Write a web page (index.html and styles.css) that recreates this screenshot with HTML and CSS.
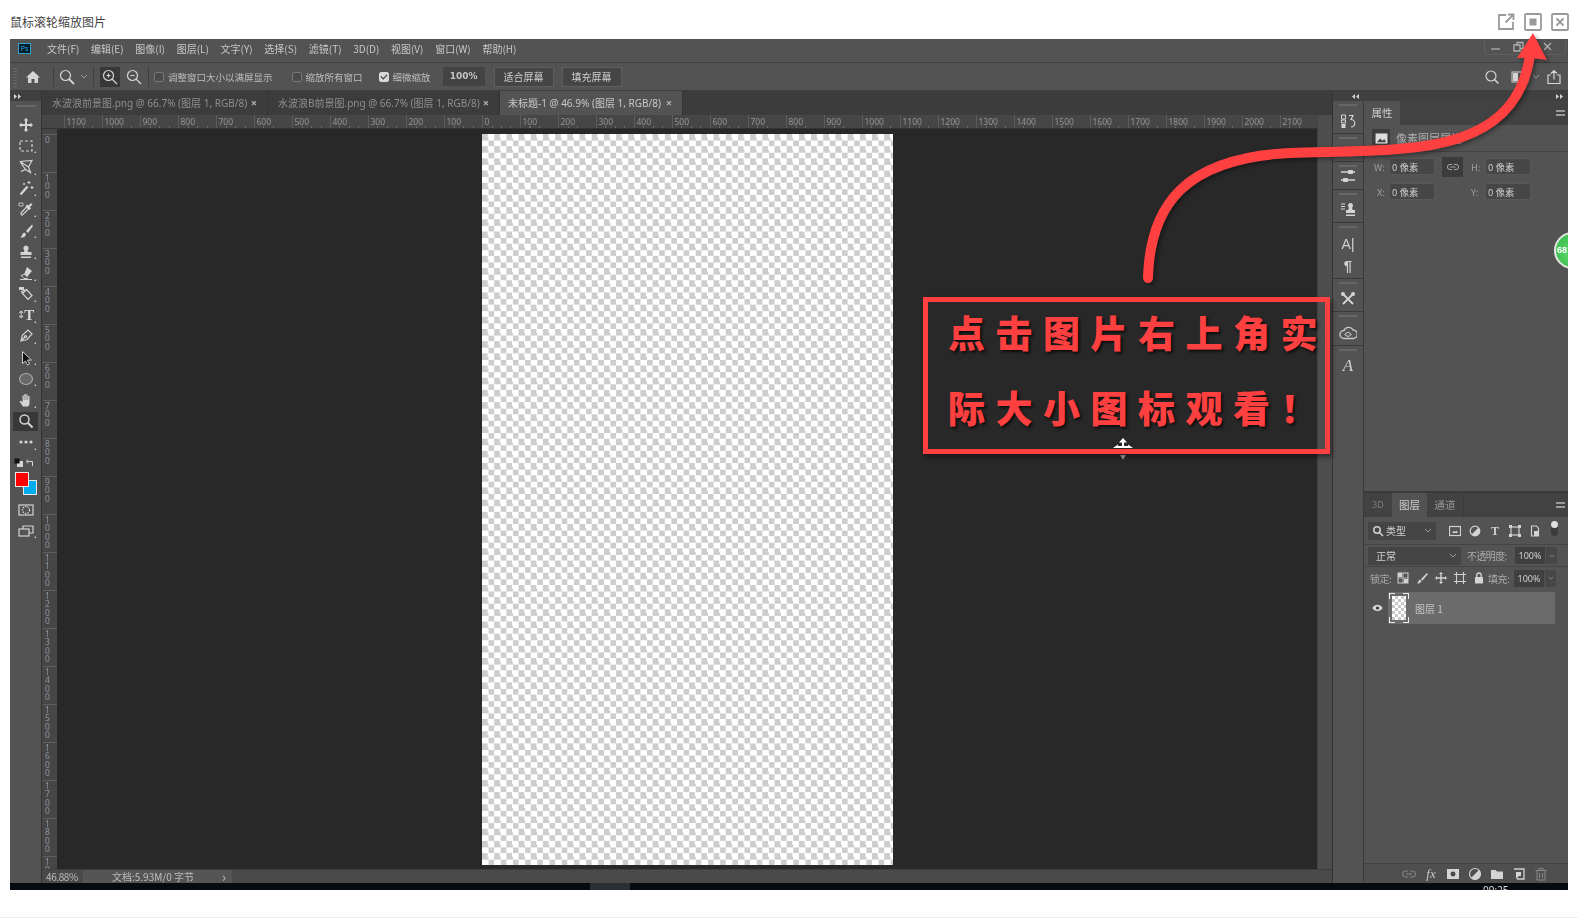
FILE: index.html
```html
<!DOCTYPE html>
<html lang="zh-CN">
<head>
<meta charset="utf-8">
<title>鼠标滚轮缩放图片</title>
<link rel="stylesheet" href="styles.css">
</head>
<body>
<header class="viewer-head">
  <div class="viewer-title">鼠标滚轮缩放图片</div>
  <div class="viewer-actions">
    <svg class="va" viewBox="0 0 18 18"><path d="M9 2H2v14h14V9M11 1.500h5.500V7M16 2L8.500 9.500"/></svg>
    <svg class="va" viewBox="0 0 18 18"><rect x="1" y="1" width="16" height="16" rx="1"/><rect class="va-fill" x="5.500" y="5.500" width="7" height="7"/></svg>
    <svg class="va" viewBox="0 0 18 18"><rect x="1" y="1" width="16" height="16" rx="1"/><path d="M5.500 5.500l7 7M12.500 5.500l-7 7"/></svg>
  </div>
</header>

<main class="ps">
  <div class="menubar">
    <span class="ps-logo">Ps</span>
    <nav class="menu">
      <span>文件(F)</span><span>编辑(E)</span><span>图像(I)</span><span>图层(L)</span><span>文字(Y)</span><span>选择(S)</span><span>滤镜(T)</span><span>3D(D)</span><span>视图(V)</span><span>窗口(W)</span><span>帮助(H)</span>
    </nav>
    <div class="winctl">
      <svg class="wc" viewBox="0 0 16 12"><path d="M3 8h9"/></svg>
      <svg class="wc" viewBox="0 0 16 12"><path d="M4 4h6v6H4zM7 4V1.500h6v6h-3"/></svg>
      <svg class="wc" viewBox="0 0 16 12"><path d="M4 2l7 7M11 2l-7 7"/></svg>
    </div>
  </div>

  <div class="optbar">
    <span class="grip"></span>
    <svg class="ic home" viewBox="0 0 16 16"><path class="f" d="M8 2L1 8.500h2V14h3.500v-4h3v4H13V8.500h2z"/></svg>
    <span class="osep s1"></span>
    <svg class="ic m1" viewBox="0 0 16 16"><circle cx="6.500" cy="6.500" r="5"/><path d="M10 10l5 5" stroke-width="1.800"/></svg>
    <svg class="chev m2" viewBox="0 0 8 5"><path d="M1 1l3 3 3-3"/></svg>
    <span class="osep s2"></span>
    <span class="obtn"><svg class="ic" viewBox="0 0 16 16"><circle cx="6.500" cy="6.500" r="5"/><path d="M10 10l5 5M4.500 6.500h4M6.500 4.500v4"/></svg></span>
    <svg class="ic m3" viewBox="0 0 16 16"><circle cx="6.500" cy="6.500" r="5"/><path d="M10 10l5 5M4.500 6.500h4"/></svg>
    <span class="osep s3"></span>
    <span class="cb c1"></span><span class="olabel">调整窗口大小以满屏显示</span>
    <span class="cb c2"></span><span class="olabel">缩放所有窗口</span>
    <span class="cb on c3"></span><span class="olabel">细微缩放</span>
    <span class="oinput">100%</span>
    <span class="obox b1">适合屏幕</span>
    <span class="obox b2">填充屏幕</span>
    <div class="oright">
      <svg class="ic" viewBox="0 0 16 16"><circle cx="7" cy="7" r="5"/><path d="M10.500 10.500l4 4" stroke-width="1.600"/></svg>
      <svg class="ws" viewBox="0 0 18 12"><rect x="1" y="1" width="16" height="10"/><path class="f" d="M2 2h5v8H2z"/></svg>
      <svg class="chev" viewBox="0 0 8 5"><path d="M1 1l3 3 3-3"/></svg>
      <svg class="ic" viewBox="0 0 16 16"><path d="M5 6H2v8.500h12V6h-3M8 10.500V1.500M5 4.500l3-3 3 3"/></svg>
    </div>
  </div>

  <div class="workspace">
    <aside class="tools">
      <div class="collapse"><svg class="tri" viewBox="0 0 8 5"><path class="f" d="M0 0l3 2.500L0 5zM4 0l3 2.500L4 5z"/></svg></div>
      <div class="vgrip"></div>
      <div class="tool"><svg class="ic" viewBox="0 0 16 16"><path class="f" d="M8 1l2.500 2.500H9V7h3.500V5.500L15 8l-2.500 2.500V9H9v3.500h1.500L8 15l-2.500-2.500H7V9H3.500v1.500L1 8l2.500-2.500H3.500V7H7V3.500H5.500z"/></svg></div>
      <div class="tool fly"><svg class="ic" viewBox="0 0 16 16"><rect x="2" y="3" width="12" height="10" stroke-dasharray="3 2"/></svg></div>
      <div class="tool fly"><svg class="ic" viewBox="0 0 16 16"><path d="M2 2.500l12-1-3.500 6.500 2 5.500L7.500 10.500 3 12.500M7.500 10.500L2 2.500M10.500 8L2 2.500"/></svg></div>
      <div class="tool fly"><svg class="ic" viewBox="0 0 16 16"><path d="M2.500 14.500l7-8" stroke-width="2.200"/><path d="M11 1v3M9.500 2.500h3M14 6v3M12.500 7.500h3M6 3v2M5 4h2" stroke-width="1"/></svg></div>
      <div class="tool fly"><svg class="ic" viewBox="0 0 16 16"><path d="M3.500 14l-.5-2 5.500-6 2 2-6 6z"/><path class="f" d="M9 3.500l1.500 1L13 2l1.500 1.500L12 6l1 1.500L11.500 9 7.500 5z"/><path d="M1 2h4v3H1z" stroke-width=".8"/></svg></div>
      <div class="tool fly"><svg class="ic" viewBox="0 0 16 16"><path class="f" d="M14 1.500L8 8l2 2 5-7zM2 14.500c3 0 6-.5 6-3.500L6.500 9.500C4 10 4.500 13 2 14.500z"/></svg></div>
      <div class="tool fly"><svg class="ic" viewBox="0 0 16 16"><path class="f" d="M8 1.500a2.600 2.600 0 012 4.200c-.5.800-.5 1.500.5 2.300h3v3h-11V8h3c1-.8 1-1.500.5-2.300a2.600 2.600 0 012-4.200zM3 12.500h10V14H3z"/></svg></div>
      <div class="tool fly"><svg class="ic" viewBox="0 0 16 16"><path class="f" d="M9 2l5 4-5 6-3-2.500z"/><path d="M6 9.500l-3 1 3 3h3l1-1.200M2 14.500h12" stroke-width="1"/></svg></div>
      <div class="tool fly"><svg class="ic" viewBox="0 0 16 16"><path d="M8.500 3.500l5.500 6-4 4-5.500-6zM4.500 7.500l-1-2 5-2" stroke-width="1.200"/><path class="f" d="M1 1h5v3H1z"/></svg></div>
      <div class="tool fly ttool"><span class="tarrow">↕</span><span class="tglyph">T</span></div>
      <div class="tool fly"><svg class="ic" viewBox="0 0 16 16"><path d="M3 13l1.500-6L10 2l4 4-5 5.500zM3 13l4-4"/><circle cx="7.500" cy="8.500" r="1"/></svg></div>
      <div class="tool fly"><svg class="ic" viewBox="0 0 16 16"><path class="blackarrow" d="M4.500 1.500v12L7.500 11l2 4 2-1-2-4h4z"/></svg></div>
      <div class="tool fly"><svg class="ic" viewBox="0 0 16 16"><ellipse class="greyfill" cx="8" cy="8" rx="6.500" ry="5.500"/></svg></div>
      <div class="tool fly"><svg class="ic" viewBox="0 0 16 16"><path class="f" d="M5 14.500L1.500 9.500l1.200-.8L4.500 10V3.500h1.300V8h.5V2h1.400v6h.5V2.500h1.400V8h.5V4h1.400v7c0 2-1 3.500-2 3.500z"/></svg></div>
      <div class="tool active"><svg class="ic" viewBox="0 0 16 16"><circle cx="6.500" cy="6.500" r="4.500" stroke-width="1.500"/><path d="M10 10l4.500 4.500" stroke-width="2"/></svg></div>
      <div class="tool fly"><svg class="ic" viewBox="0 0 16 16"><circle class="f" cx="3" cy="8" r="1.600"/><circle class="f" cx="8" cy="8" r="1.600"/><circle class="f" cx="13" cy="8" r="1.600"/></svg></div>
      <div class="swaprow">
        <svg class="mini" viewBox="0 0 9 9"><rect class="f" x="3" y="3" width="6" height="6"/><rect class="blk" x=".5" y=".5" width="5" height="5"/></svg>
        <svg class="mini" viewBox="0 0 9 9"><path d="M1 3.500h5.500V8M0 3.500L2 1.500M0 3.500L2 5.500"/></svg>
      </div>
      <div class="colors"><span class="bgc"></span><span class="fgc"></span></div>
      <div class="tool mask"><svg class="ic" viewBox="0 0 16 16"><rect x="1" y="3" width="14" height="10"/><circle cx="8" cy="8" r="3.500" stroke-dasharray="1.500 1"/></svg></div>
      <div class="tool fly"><svg class="ic" viewBox="0 0 16 16"><rect x="1" y="6" width="10" height="7"/><path d="M5 6V3h10v7h-4"/></svg></div>
    </aside>

    <section class="center">
      <div class="tabs">
        <div class="tab t1"><span>水波浪前景图.png @ 66.7% (图层 1, RGB/8)</span><i>×</i></div>
        <div class="tab t2"><span>水波浪B前景图.png @ 66.7% (图层 1, RGB/8)</span><i>×</i></div>
        <div class="tab cur"><span>未标题-1 @ 46.9% (图层 1, RGB/8)</span><i>×</i></div>
      </div>
      <div class="docrow">
        <div class="docmain">
          <div class="hruler">
            <span class="corner"></span>
            <div class="hticks">
              <span>1100</span><span>1000</span><span>900</span><span>800</span><span>700</span><span>600</span><span>500</span><span>400</span><span>300</span><span>200</span><span>100</span><span>0</span><span>100</span><span>200</span><span>300</span><span>400</span><span>500</span><span>600</span><span>700</span><span>800</span><span>900</span><span>1000</span><span>1100</span><span>1200</span><span>1300</span><span>1400</span><span>1500</span><span>1600</span><span>1700</span><span>1800</span><span>1900</span><span>2000</span><span>2100</span>
            </div>
          </div>
          <div class="canvasrow">
            <div class="vruler">
              <span>0</span><span>100</span><span>200</span><span>300</span><span>400</span><span>500</span><span>600</span><span>700</span><span>800</span><span>900</span><span>1000</span><span>1100</span><span>1200</span><span>1300</span><span>1400</span><span>1500</span><span>1600</span><span>1700</span><span>1800</span><span>1900</span>
            </div>
            <div class="canvas"><div class="doc"></div></div>
          </div>
        </div>
        <div class="vscroll"></div>
      </div>
      <div class="status">
        <span class="zoomval">46.88%</span>
        <div class="docinfo"><span>文档:5.93M/0 字节</span><i>›</i></div>
      </div>
    </section>

    <aside class="dock">
      <div class="dockstrip">
        <svg class="tri" viewBox="0 0 8 5"><path class="f" d="M3 0L0 2.500 3 5zM7 0L4 2.500 7 5z"/></svg>
        <svg class="tri" viewBox="0 0 8 5"><path class="f" d="M0 0l3 2.500L0 5zM4 0l3 2.500L4 5z"/></svg>
      </div>
      <div class="dockbody">
        <div class="iconcol">
          <div class="igroup g1"><svg class="ic" viewBox="0 0 16 16"><path d="M1.500 2h4v4h-4zM1.500 7h4v3h-4z" stroke-width="1"/><path class="f" d="M1.500 11h4v4h-4z"/><path d="M9 2.500h4l-2 4a3.500 3.500 0 010 7.500"/></svg></div>
          <div class="igroup g2"></div>
          <div class="igroup g3"><svg class="ic" viewBox="0 0 16 16"><path d="M1 4h7M13 4h2M1 12h2M8 12h7" stroke-width="1.500"/><rect class="f" x="8" y="2" width="5" height="4" rx="1"/><rect class="f" x="3" y="10" width="5" height="4" rx="1"/></svg></div>
          <div class="igroup g4"><svg class="ic" viewBox="0 0 16 16"><path d="M1 2h4M1 4.500h4M1 7h4" stroke-width="1"/><path class="f" d="M10.500 1a2.500 2.500 0 012 4c-.5.800-.5 1.500.3 3H15v3H6V8h2.200c.8-1.500.8-2.200.3-3a2.500 2.500 0 012-4zM6 12.500h9V14H6z"/></svg></div>
          <div class="igroup g5"><span class="ig-a">A<em>|</em></span><span class="ig-p">¶</span></div>
          <div class="igroup g6"><svg class="ic" viewBox="0 0 16 16"><path d="M3 3l10 10M13 3L3 13" stroke-width="1.800"/><circle class="f" cx="3" cy="3" r="2"/><circle class="f" cx="13" cy="3" r="2"/></svg></div>
          <div class="igroup g7"><svg class="cc" viewBox="0 0 18 14"><path d="M5 12.500a4 4 0 010-8 5 5 0 019-.500 4.200 4.200 0 010 8.500z" stroke-width="1.400"/><path d="M6 8.500c2-3 4-3 6 0-2 2.500-4 2.500-6 0z" stroke-width="1.200"/></svg></div>
          <div class="igroup g8"><span class="ig-s">A</span></div>
        </div>
        <div class="panels">
          <section class="props">
            <div class="ptabs">
              <span class="ptab on">属性</span>
              <span class="pmenu"></span>
            </div>
            <div class="pxrow">
              <span class="pxicon"><svg viewBox="0 0 14 12"><rect class="pxf" x=".5" y=".5" width="13" height="11"/><path class="pxd" d="M2 10l3.500-4 2.500 2.500L10 6.500l2 3.500z"/></svg></span>
              <span class="pxtext">像素图层属性</span>
            </div>
            <div class="fieldarea">
              <div class="frow">
                <label class="flab fl1">W:</label><span class="finp">0 像素</span>
                <span class="flink"><svg viewBox="0 0 14 8"><path d="M6 1H3.500a3 3 0 000 6H6M8 1h2.500a3 3 0 010 6H8M4 4h6"/></svg></span>
                <label class="flab fl2">H:</label><span class="finp">0 像素</span>
              </div>
              <div class="frow second">
                <label class="flab fl1">X:</label><span class="finp">0 像素</span>
                <label class="flab fl3">Y:</label><span class="finp">0 像素</span>
              </div>
            </div>
          </section>
          <section class="layers">
            <div class="ptabs">
              <span class="ptab dim">3D</span><span class="ptab on w35">图层</span><span class="ptab w37">通道</span>
              <span class="pmenu"></span>
            </div>
            <div class="lrow filter">
              <span class="lsel ls1"><svg class="ic12" viewBox="0 0 12 12"><circle cx="5" cy="5" r="3.200" stroke-width="1.500"/><path d="M7.500 7.500l3.500 3.500" stroke-width="1.600"/></svg>类型<svg class="chev" viewBox="0 0 8 5"><path d="M1 1l3 3 3-3"/></svg></span>
              <svg class="ic12 fil1" viewBox="0 0 12 12"><rect x=".5" y="1.500" width="11" height="9" stroke-width="1.200"/><path class="f" d="M3 8l2-2.500L6 7l1.500-1.500L9 8z"/></svg>
              <svg class="ic12 fil" viewBox="0 0 12 12"><circle cx="6" cy="6" r="4.800" stroke-width="1.200"/><path class="f" d="M9.500 2.500A4.800 4.800 0 012.500 9.500z"/></svg>
              <span class="fil tg">T</span>
              <svg class="ic12 fil" viewBox="0 0 12 12"><rect x="2" y="2" width="8" height="8" stroke-width="1.200"/><path class="f" d="M0 0h3v3H0zM9 0h3v3H9zM0 9h3v3H0zM9 9h3v3H9z"/></svg>
              <svg class="ic12 fil" viewBox="0 0 12 12"><path d="M2.500 1h5l2 2.500V11h-7z" stroke-width="1.200"/><path class="f" d="M5 6h5v5H5z"/></svg>
              <span class="switch"><b></b></span>
            </div>
            <div class="lrow blend">
              <span class="lsel ls2">正常<svg class="chev" viewBox="0 0 8 5"><path d="M1 1l3 3 3-3"/></svg></span>
              <span class="ltxt opa">不透明度:</span>
              <span class="lval">100%</span><span class="ldrop"><svg class="chev" viewBox="0 0 8 5"><path d="M1 1l3 3 3-3"/></svg></span>
            </div>
            <div class="lrow lock">
              <span class="ltxt">锁定:</span>
              <svg class="ic12 lk1" viewBox="0 0 12 12"><path class="f" d="M1 1h4v4H1zM7 7h4v4H7z"/><rect x="1" y="1" width="10" height="10" stroke-width="1"/><path d="M6 1v10M1 6h10" stroke-width=".8"/></svg>
              <svg class="ic12 lk" viewBox="0 0 12 12"><path class="f" d="M11 1L5 7l1.500 1.500L12 2zM1 11.500c2 0 4-.5 4.500-2.500L4 7.500C2 8 3 10.500 1 11.500z"/></svg>
              <svg class="ic12 lk" viewBox="0 0 12 12"><path class="f" d="M6 0l2 2H6.700v3.300H10V4l2 2-2 2V6.700H6.700V10H8l-2 2-2-2h1.300V6.700H2V8L0 6l2-2v1.300h3.300V2H4z"/></svg>
              <svg class="ic12 lk" viewBox="0 0 12 12"><path d="M2.500 0v12M9.500 0v12M0 2.500h12M0 9.500h12" stroke-width="1.100"/></svg>
              <svg class="ic12 lk" viewBox="0 0 12 12"><path class="f" d="M2 5h8v6.500H2z"/><path d="M3.800 5V3.200a2.200 2.200 0 014.400 0V5" stroke-width="1.300"/></svg>
              <span class="ltxt fill">填充:</span>
              <span class="lval">100%</span><span class="ldrop"><svg class="chev" viewBox="0 0 8 5"><path d="M1 1l3 3 3-3"/></svg></span>
            </div>
            <div class="layerlist">
              <div class="layer">
                <svg class="eye" viewBox="0 0 14 10"><path class="f" d="M7 1c3 0 5.500 2 6.500 4-1 2-3.500 4-6.500 4S1.500 7 .5 5C1.500 3 4 1 7 1z"/><circle class="blk" cx="7" cy="5" r="2"/></svg>
                <span class="thumb"><span class="thumbimg"></span></span>
                <span class="lname">图层 1</span>
              </div>
            </div>
            <div class="lfoot">
              <svg class="ic14 dimmed" viewBox="0 0 14 8"><path d="M6 1H3.500a3 3 0 000 6H6M8 1h2.500a3 3 0 010 6H8M4 4h6"/></svg>
              <span class="fx">fx</span>
              <svg class="ic14" viewBox="0 0 14 14"><path class="f" d="M1 2h12v10H1z"/><circle class="dk" cx="7" cy="7" r="3"/></svg>
              <svg class="ic14" viewBox="0 0 14 14"><circle cx="7" cy="7" r="5.500" stroke-width="1.200"/><path class="f" d="M11 3A5.500 5.500 0 013 11z"/></svg>
              <svg class="ic14" viewBox="0 0 14 14"><path class="f" d="M1 3h4.500L7 4.500h6V12H1z"/></svg>
              <svg class="ic14" viewBox="0 0 14 14"><path d="M2 2h10v10H5" stroke-width="1.300"/><path class="f" d="M4 5h5v4H7l-3 3z"/></svg>
              <svg class="ic14 dimmed" viewBox="0 0 14 14"><path d="M3 4v9h8V4M1.500 3.500h11M5 3.500V1.500h4v2M5.500 6v5M8.500 6v5" stroke-width="1"/></svg>
            </div>
          </section>
        </div>
      </div>
      <span class="badge">68</span>
    </aside>
  </div>

  <div class="taskbar"><span class="taskitem"></span><span class="clock">09:25</span></div>
</main>

<footer class="pagefoot"></footer>

<svg class="cursor" viewBox="0 0 22 24"><path class="cur-w" d="M11 0l4 4.500h-3V8h4V6.500l5 3.500H1l5-3.500V8h4V4.500H7z"/><path class="cur-g" d="M8 17h6l-3 4.500z"/></svg>
<div class="callout">
  <p>点击图片右上角实</p>
  <p>际大小图标观看！</p>
</div>
<svg class="arrow" viewBox="0 0 1578 919">
  <path class="arrow-line" d="M1148 278C1150 205 1185 158 1290 153C1400 149 1515 160 1530 55"/>
  <path class="arrow-head" d="M1533 33L1547 60L1531 58L1517 58z"/>
</svg>
</body>
</html>
```

FILE: styles.css
```css
* { box-sizing: border-box; }
html, body { margin: 0; padding: 0; }
body {
  width: 1578px;
  height: 919px;
  overflow: hidden;
  background: #fff;
  position: relative;
  font-family: "Noto Sans", "Noto Sans CJK SC", sans-serif;
}

/* viewer frame */
.viewer-head { height: 39px; display: flex; justify-content: space-between; padding: 13px 9px 0 10px; }
.viewer-title { font-size: 12px; line-height: 18px; color: #444; font-family: "Noto Sans CJK SC", sans-serif; }
.viewer-actions { display: flex; gap: 9px; }
.va { width: 18px; height: 18px; fill: none; stroke: #9a9a9a; stroke-width: 1.800; }
.va-fill { fill: #9a9a9a; stroke: none; }
.pagefoot { height: 1px; margin-top: 27px; background: #eee; }

/* photoshop window */
.ps {
  width: 1558px;
  height: 851px;
  margin-left: 10px;
  display: flex;
  flex-direction: column;
  overflow: hidden;
  position: relative;
  background: #535353;
  color: #c4c4c4;
  font-size: 11px;
  filter: blur(.3px);
}
.ic { width: 16px; height: 16px; fill: none; stroke: #d4d4d4; stroke-width: 1.200; flex: none; }
.f { fill: #d4d4d4; stroke: none; }
.blk { fill: #111; stroke: none; }
.chev { width: 8px; height: 5px; fill: none; stroke: #9a9a9a; flex: none; }

.menubar { height: 23px; flex: none; display: flex; align-items: center; padding: 0 0 4px 8px; background: #535353; }
.ps-logo {
  width: 13px; height: 11px;
  background: #001d26;
  border: 1px solid #2fa3d6;
  color: #31a8ff;
  font-size: 7px;
  line-height: 9px;
  text-align: center;
}
.menu { display: flex; gap: 11.700px; margin-left: 16px; font-family: "Noto Sans CJK SC", sans-serif; font-size: 10px; line-height: 16px; white-space: nowrap; color: #c8c8c8; }
.winctl { margin-left: auto; margin-right: 2px; width: 82px; height: 16px; align-self: flex-start; display: flex; align-items: center; gap: 6px; padding-left: 3px; border: 1px solid #5e5e5e; border-top: 0; border-radius: 0 0 3px 3px; }
.wc { width: 16px; height: 12px; fill: none; stroke: #b0b0b0; stroke-width: 1.300; }
.wc:last-child { margin-left: 8px; }

.optbar {
  height: 29px; flex: none;
  display: flex; align-items: center;
  padding-left: 3px;
  background: #535353;
  border-top: 1px solid #3e3e3e;
  border-bottom: 1px solid #3e3e3e;
  font-family: "Noto Sans CJK SC", sans-serif;
  white-space: nowrap;
}
.grip { width: 4px; height: 20px; background: repeating-linear-gradient(0deg, #6a6a6a 0 1px, transparent 1px 3px); }
.home { margin-left: 8px; }
.osep { width: 1px; height: 20px; background: #404040; flex: none; }
.s1 { margin-left: 12px; }
.m1 { margin-left: 5px; }
.m2 { margin-left: 5px; }
.s2 { margin-left: 5px; }
.obtn { width: 20px; height: 20px; margin-left: 6px; background: #383838; display: flex; align-items: center; justify-content: center; }
.m3 { margin-left: 6px; }
.s3 { margin-left: 6px; }
.cb { width: 10px; height: 10px; border: 1px solid #777; border-radius: 2px; background: #4a4a4a; flex: none; }
.cb.on { background: #d8d8d8; border-color: #d8d8d8; }
.cb.on::after { content: ""; display: block; width: 5px; height: 3px; margin: 1px 0 0 1.500px; border-left: 1.500px solid #333; border-bottom: 1.500px solid #333; transform: rotate(-45deg); }
.c1 { margin-left: 5px; }
.olabel { margin-left: 4px; color: #bdbdbd; font-size: 9.500px; }
.c2 { margin-left: 19px; }
.c3 { margin-left: 16px; }
.oinput { width: 42px; height: 19px; margin-left: 12px; background: #434343; text-align: center; line-height: 19px; font-size: 9px; font-weight: 600; font-family: "DejaVu Sans", sans-serif; }
.obox { width: 60px; height: 20px; background: #454545; border: 1px solid #5d5d5d; text-align: center; line-height: 18px; font-size: 10px; color: #cfcfcf; }
.b1 { margin-left: 9px; }
.b2 { margin-left: 8px; }
.oright { margin-left: auto; margin-right: 6px; display: flex; align-items: center; gap: 6px; }
.ws { width: 18px; height: 12px; fill: none; stroke: #d4d4d4; margin-left: 5px; }
.oright .chev { margin-left: -3px; }

.workspace { flex: 1; min-height: 0; display: flex; background: #333; }

/* tools */
.tools { width: 31px; flex: none; background: #535353; display: flex; flex-direction: column; align-items: center; }
.collapse { width: 100%; height: 10px; background: #404040; padding-left: 4px; display: flex; align-items: center; }
.tri { width: 8px; height: 5px; fill: #c0c0c0; }
.vgrip { width: 100%; height: 13px; background: linear-gradient(#666, #666) center 4px / 20px 2px no-repeat; }
.tool { width: 25px; height: 21.200px; flex: none; display: flex; align-items: center; justify-content: center; position: relative; }
.tool.fly::after { content: ""; position: absolute; right: 2px; bottom: 3px; border: 1.500px solid transparent; border-right-color: #cfcfcf; border-bottom-color: #cfcfcf; }
.tool.active { background: #383838; height: 19px; margin: 1px 0 1.200px; }
.ttool { gap: 0; color: #d8d8d8; }
.tarrow { font-size: 10px; line-height: 16px; margin-right: -1px; font-family: "DejaVu Sans", sans-serif; }
.tglyph { font: bold 15px/16px "Liberation Serif", serif; }
.blackarrow { fill: #111; stroke: #ccc; stroke-width: 1; }
.greyfill { fill: #686868; stroke: #a8a8a8; }
.swaprow { width: 100%; height: 17px; flex: none; padding: 3px 6px 0 4px; display: flex; justify-content: space-between; margin-top: 2px; }
.mini { width: 9px; height: 9px; fill: none; stroke: #d4d4d4; }
.colors { width: 23px; height: 23px; flex: none; display: grid; margin-left: 1px; }
.fgc, .bgc { grid-area: 1 / 1; width: 14px; height: 15px; border: 1px solid #e8e8e8; }
.fgc { background: #f00; }
.bgc { background: #00aeef; margin: 8px 0 0 8px; }
.mask { margin-top: 4px; }

/* centre */
.center { width: 1290px; margin-left: 1px; flex: none; display: flex; flex-direction: column; }
.tabs { height: 24px; flex: none; display: flex; background: #3c3c3c; }
.tab { display: flex; align-items: center; justify-content: space-between; padding: 0 10px 2px 10px; border-right: 1px solid #343434; white-space: nowrap; font-size: 10px; color: #8f8f8f; font-family: "Noto Sans", "Noto Sans CJK SC", sans-serif; }
.tab i { font-style: normal; font-weight: 700; font-size: 11px; color: #b0b0b0; }
.t1 { width: 226px; }
.t2 { width: 232px; }
.cur { width: 183px; background: #535353; color: #c8c8c8; padding-left: 8px; }
.docrow { flex: 1; min-height: 0; display: flex; }
.docmain { width: 1275px; flex: none; display: flex; flex-direction: column; }
.vscroll { flex: 1; background: #4d4d4d; border-left: 1px solid #444; }
.hruler { height: 14px; flex: none; display: flex; background: #464646; border-bottom: 1px solid #333; }
.corner { width: 21px; flex: none; background: #464646; }
.hticks { display: flex; flex: 1; margin-left: .500px; }
.hticks span {
  width: 38px; flex: none;
  padding-left: 2px;
  border-left: 1px solid #5c5c5c;
  font: 8.500px/13px "Noto Sans", sans-serif;
  color: #959595;
  background: repeating-linear-gradient(90deg, transparent 0 8.500px, #6c6c6c 8.500px 9.500px) left bottom / 100% 2px no-repeat;
}
.canvasrow { flex: 1; min-height: 0; display: flex; }
.vruler { width: 15px; flex: none; padding: 5px 0 0 1px; background: #464646; overflow: hidden; }
.vruler span {
  display: block;
  height: 38px;
  padding: 1px 5px 0 2px;
  border-top: 1px solid #5f5f5f;
  font: 8.500px/8.300px "Noto Sans", sans-serif;
  color: #8793a0;
  width: 100%;
  word-break: break-all;
}
.canvas { flex: 1; background: #282828; padding: 5px 0 0 425px; overflow: hidden; }
.doc {
  width: 411px; height: 731px;
  background: repeating-conic-gradient(#fff 0 25%, #cdcdcd 0 50%) 0 0 / 12.200px 12.200px;
}
.status { height: 14px; flex: none; display: flex; align-items: center; background: #4a4a4a; border-top: 1px solid #3d3d3d; font-family: "Noto Sans CJK SC", sans-serif; font-size: 10px; line-height: 12px; color: #bdbdbd; }
.zoomval { width: 41px; padding-left: 4px; letter-spacing: -.4px; white-space: nowrap; }
.docinfo { width: 149px; height: 100%; background: #555; padding: 0 6px 0 29px; display: flex; justify-content: space-between; align-items: center; }
.docinfo i { font-style: normal; font-size: 13px; }

/* dock */
.dock { flex: 1; min-width: 0; margin-left: 1px; display: flex; flex-direction: column; position: relative; }
.dockstrip { height: 10px; flex: none; background: #404040; display: flex; justify-content: space-between; align-items: center; padding: 0 4px 0 19px; }
.dockbody { flex: 1; min-height: 0; display: flex; }
.iconcol { width: 31px; flex: none; background: #535353; border-right: 1px solid #3a3a3a; display: flex; flex-direction: column; }
.igroup { border-bottom: 1px solid #3a3a3a; display: flex; flex-direction: column; align-items: center; justify-content: center; flex: none; background: linear-gradient(#666, #666) center 3px / 18px 2px no-repeat; padding-top: 8px; }
.g1 { height: 33px; }
.g2 { height: 28px; }
.g3 { height: 28px; padding-top: 0; }
.g4 { height: 33px; }
.g5 { height: 56px; }
.g6 { height: 33px; }
.g7 { height: 34px; }
.g8 { height: 32px; border-bottom: 0; }
.cc { width: 18px; height: 14px; fill: none; stroke: #c8c8c8; }
.ig-a { font: 14px/22px "Liberation Sans", sans-serif; color: #d0d0d0; }
.ig-a em { font-style: normal; font-size: 15px; }
.ig-p { font: bold 15px/22px "Liberation Sans", sans-serif; color: #d0d0d0; }
.ig-s { font: italic 17px/20px "Liberation Serif", serif; color: #d0d0d0; }
.panels { flex: 1; min-width: 0; display: flex; flex-direction: column; background: #3a3a3a; gap: 2px; }
.ptabs { height: 24px; flex: none; display: flex; background: #424242; font-family: "Noto Sans CJK SC", sans-serif; font-size: 10.500px; }
.ptab { width: 36px; text-align: center; line-height: 23px; color: #999; }
.ptab.on { background: #535353; color: #cfcfcf; }
.ptab.dim { width: 28px; color: #7a7a7a; font-size: 9.500px; }
.w35 { width: 35px; }
.w37 { width: 37px; border-right: 1px solid #3a3a3a; }
.pmenu { margin: 9px 3px 0 auto; width: 9px; height: 6px; border-top: 2px solid #999; border-bottom: 2px solid #999; flex: none; }
.props { height: 390px; flex: none; background: #535353; display: flex; flex-direction: column; }
.pxrow { height: 27px; flex: none; display: flex; align-items: center; padding-left: 8px; border-bottom: 1px solid #444; }
.pxicon { width: 18px; height: 18px; background: #3c3c3c; display: flex; align-items: center; justify-content: center; }
.pxicon svg { width: 13px; height: 11px; }
.pxf { fill: #dcdcdc; }
.pxd { fill: #444; }
.pxtext { margin-left: 6px; font-family: "Noto Sans CJK SC", sans-serif; font-size: 11px; color: #b0b0b0; }
.fieldarea { flex: 1; margin-right: 13px; padding-top: 6px; }
.frow { height: 17px; display: flex; align-items: center; font-family: "Noto Sans CJK SC", sans-serif; font-size: 9.500px; }
.second { margin-top: 8px; }
.flab { color: #9c9c9c; font-size: 9.500px; }
.fl1 { width: 25px; padding-right: 4px; text-align: right; }
.fl2 { width: 14px; margin-left: 8px; }
.fl3 { width: 14px; margin-left: 36px; }
.finp { width: 46px; height: 17px; line-height: 17px; padding-left: 2px; background: #464646; border: 1px solid #585858; color: #cdcdcd; }
.flink { width: 21px; height: 20px; margin-left: 7px; background: #3c3c3c; display: flex; align-items: center; justify-content: center; }
.flink svg { width: 12px; height: 8px; fill: none; stroke: #bbb; }

.layers { flex: 1; min-height: 0; background: #535353; display: flex; flex-direction: column; }
.lrow { flex: none; display: flex; align-items: center; font-family: "Noto Sans CJK SC", sans-serif; font-size: 10px; }
.ic12 { width: 12px; height: 12px; fill: none; stroke: #d0d0d0; flex: none; }
.filter { height: 28px; padding-left: 4px; border-bottom: 1px solid #454545; }
.lsel { height: 18px; background: #454545; display: flex; align-items: center; color: #cfcfcf; }
.ls1 { width: 68px; padding: 0 4px; gap: 2px; }
.ls1 .chev { margin-left: auto; }
.ls2 { width: 93px; padding: 0 4px 0 8px; }
.ls2 .chev { margin-left: auto; }
.fil1 { margin-left: 13px; }
.fil { margin-left: 8px; }
.tg { width: 12px; font: bold 12px/12px "Liberation Serif", serif; text-align: center; color: #d0d0d0; }
.switch { margin-left: 10px; width: 7px; height: 15px; border-radius: 4px; background: #3c3c3c; margin-top: -4px; }
.switch b { display: block; width: 7px; height: 7px; border-radius: 50%; background: #e0e0e0; }
.blend { height: 22px; padding-left: 4px; border-bottom: 1px solid #454545; }
.opa { margin-left: 6px; width: 48px; letter-spacing: -.6px; }
.ltxt { color: #aaa; white-space: nowrap; }
.lval { width: 30px; height: 17px; background: #3f3f3f; text-align: center; line-height: 17px; font-size: 9px; font-family: "Noto Sans", sans-serif; color: #d0d0d0; }
.ldrop { width: 11px; height: 17px; margin-left: 1px; background: #474747; display: flex; align-items: center; justify-content: center; }
.ldrop .chev { width: 6px; height: 4px; }
.lock { height: 22px; padding-left: 6px; }
.lock .ltxt:first-child { width: 25px; letter-spacing: -.5px; }
.lk1 { margin-left: 2px; }
.lk { margin-left: 7px; }
.lock .fill { margin-left: 3px; width: 26px; letter-spacing: -.4px; }
.layerlist { flex: 1; min-height: 0; padding: 3px 13px 0 0; }
.layer { height: 32px; display: flex; align-items: center; background: linear-gradient(90deg, #535353 0 24px, #6b6b6b 24px); }
.eye { width: 11px; height: 8px; margin-left: 8px; }
.eye .blk { fill: #333; }
.thumb { width: 20px; height: 30px; margin-left: 6px; padding: 3px 3px; background:
  linear-gradient(#eee,#eee) 0 0/6px 1px no-repeat, linear-gradient(#eee,#eee) 0 0/1px 6px no-repeat,
  linear-gradient(#eee,#eee) 100% 0/6px 1px no-repeat, linear-gradient(#eee,#eee) 100% 0/1px 6px no-repeat,
  linear-gradient(#eee,#eee) 0 100%/6px 1px no-repeat, linear-gradient(#eee,#eee) 0 100%/1px 6px no-repeat,
  linear-gradient(#eee,#eee) 100% 100%/6px 1px no-repeat, linear-gradient(#eee,#eee) 100% 100%/1px 6px no-repeat; }
.thumbimg { display: block; width: 100%; height: 100%; background: repeating-conic-gradient(#c8c8c8 0 25%, #fff 0 50%) 0 0 / 6px 6px; }
.lname { margin-left: 6px; font-family: "Noto Sans CJK SC", sans-serif; font-size: 10px; color: #c4c4c4; }
.lfoot { height: 20px; flex: none; display: flex; align-items: center; gap: 8px; justify-content: flex-end; padding-right: 20px; background: #4f4f4f; border-top: 1px solid #434343; }
.ic14 { width: 14px; height: 14px; fill: none; stroke: #d0d0d0; flex: none; }
.dk { fill: #4a4a4a; }
.dimmed { opacity: .45; }
.fx { width: 14px; font: italic 13px/14px "Liberation Serif", serif; color: #c8c8c8; text-align: center; }
.badge {
  position: absolute;
  left: 221px; top: 141px;
  width: 37px; height: 37px;
  border-radius: 50%;
  background: radial-gradient(circle at 50% 55%, #62db6a, #2fb54a);
  border: 2px solid #e6e6e6;
  color: #fff;
  font: bold 9px/33px "Liberation Sans", sans-serif;
  padding-left: 1px;
}
.taskbar { height: 7px; flex: none; display: flex; background: #060b12; overflow: hidden; }
.taskitem { width: 40px; margin-left: 580px; background: #2a2f36; }
.clock { margin-left: 853px; margin-top: 1px; color: #ddd; font-size: 10px; line-height: 12px; }

/* annotation drawn over the screenshot */
.callout {
  position: absolute;
  left: 923px; top: 297px;
  width: 407px; height: 157px;
  border: 5px solid #ff4040;
  box-shadow: 2px 3px 5px rgba(0, 0, 0, .45);
  padding: 9px 0 0 20px;
  display: flex; flex-direction: column; gap: 33px;
  white-space: nowrap;
}
.callout p {
  margin: 0;
  font: 900 37px/42px "Noto Sans CJK SC", sans-serif;
  letter-spacing: 10.500px;
  color: #ff4040;
  text-shadow: 2px 2px 3px rgba(0, 0, 0, .7);
}
.cursor { position: absolute; left: 1112px; top: 438px; width: 22px; height: 24px; }
.cur-w { fill: #fff; }
.cur-g { fill: #aaa; }
.arrow { position: absolute; left: 0; top: 0; width: 1578px; height: 919px; pointer-events: none; filter: drop-shadow(2px 2px 2px rgba(0, 0, 0, .4)); }
.arrow-line { fill: none; stroke: #ff4040; stroke-width: 10; stroke-linecap: round; }
.arrow-head { fill: #ff4040; }
```
